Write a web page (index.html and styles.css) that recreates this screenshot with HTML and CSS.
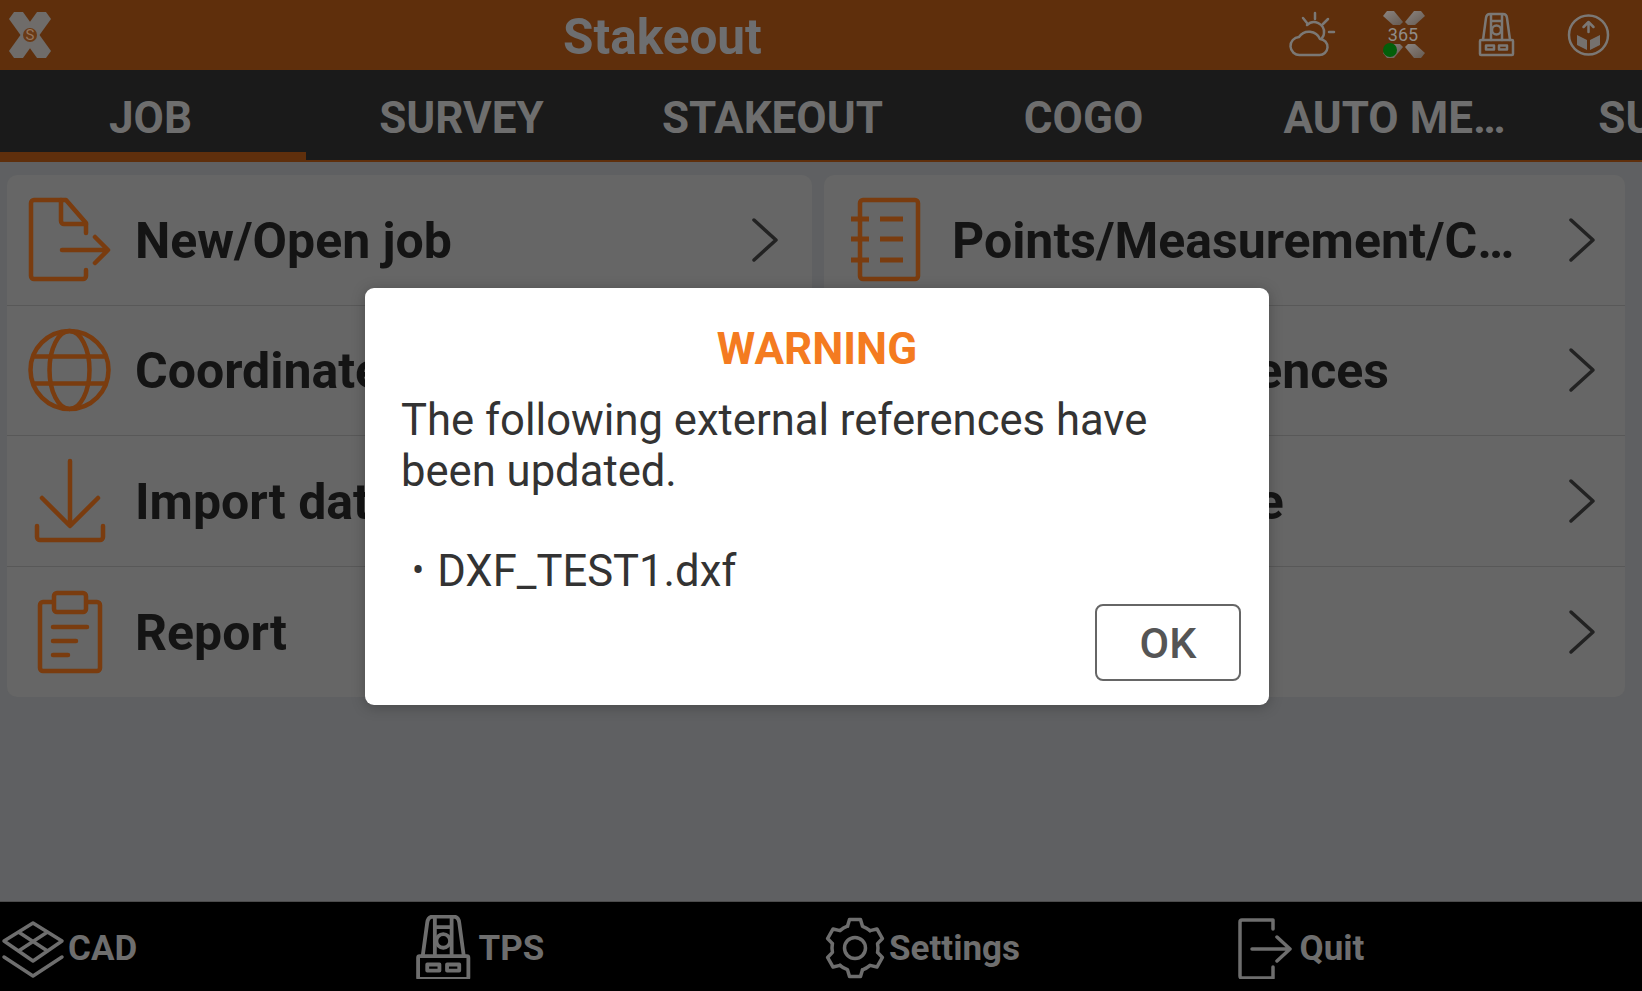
FILE: index.html
```html
<!DOCTYPE html>
<html lang="en">
<head>
    <meta charset="UTF-8">
    <title>Stakeout</title>
    <link rel="stylesheet" href="styles.css">
</head>
<body>
    <svg class="defs" width="0" height="0">
        <linearGradient id="fade" x1="0" y1="0" x2="1" y2="1">
            <stop offset="0" stop-color="#8b8582"/>
            <stop offset="1" stop-color="#665a50"/>
        </linearGradient>
        <symbol id="station" viewBox="0 0 50 50">
            <path d="M12 30 15 8Q15.500 4 19 4H32Q35.500 4 36 8L39 30M20 30V4M31 30V4M20 11H31"/>
            <rect x="9" y="30" width="33" height="15" rx="1"/>
            <circle class="solid" cx="25.500" cy="20" r="4.500"/>
            <rect class="solid" x="15" y="35.500" width="8" height="4"/>
            <rect class="solid" x="28" y="35.500" width="8" height="4"/>
        </symbol>
    </svg>

    <header class="topbar">
        <svg class="logo" width="50" height="50" viewBox="0 0 50 50">
            <polygon class="solid" points="4,9 9,2 18,2 46,41 41,48 32,48"/>
            <polygon class="solid" points="46,9 41,2 32,2 4,41 9,48 18,48"/>
            <circle class="hub" cx="25" cy="25" r="7"/>
            <text class="hub-s" x="25" y="30" text-anchor="middle">S</text>
        </svg>
        <h1 class="title">Stakeout</h1>
        <div class="status">
            <span class="slot">
                <svg width="50" height="50" viewBox="0 0 50 50">
                    <path d="M13 45a9 9 0 0 1-1-18a12 12 0 0 1 21 2a8 8 0 0 1-1 16z"/>
                    <path d="M20 15a10 10 0 0 1 17 8q0 3-2 5M28 3v6M16 8l4 5M41 9l-5 5M42 22h5"/>
                </svg>
            </span>
            <span class="slot">
                <svg width="50" height="50" viewBox="0 0 50 50">
                    <polygon class="piece" points="4,6 8,1 15,1 24,12 21,15 14,15"/>
                    <polygon class="piece" points="46,6 42,1 35,1 26,12 29,15 36,15"/>
                    <polygon class="piece" points="46,43 42,48 35,48 26,37 29,34 36,34"/>
                    <polygon class="piece" points="4,43 8,48 15,48 24,37 21,34 14,34"/>
                    <circle class="led" cx="11" cy="40" r="7"/>
                    <text class="days" x="24" y="31" text-anchor="middle">365</text>
                </svg>
            </span>
            <span class="slot">
                <svg width="50" height="50"><use href="#station" width="50" height="50"/></svg>
            </span>
            <span class="slot">
                <svg width="50" height="50" viewBox="0 0 50 50">
                    <circle cx="25.500" cy="25" r="19.500"/>
                    <path d="M25.500 22V12M20.500 17l5-5 5 5"/>
                    <polygon class="solid" points="14,25 24,30 24,40 14,35"/>
                    <polygon class="solid" points="37,25 27,30 27,40 37,35"/>
                </svg>
            </span>
        </div>
    </header>

    <nav class="tabs">
        <a class="tab active">JOB</a>
        <a class="tab">SURVEY</a>
        <a class="tab">STAKEOUT</a>
        <a class="tab">COGO</a>
        <a class="tab">AUTO ME…</a>
        <a class="tab">SURFACES</a>
    </nav>

    <main class="content">
        <section class="card">
            <div class="row">
                <svg class="ico" width="90" height="90" viewBox="0 0 90 90">
                    <path d="M61 38V28L41 5H9a3 3 0 0 0-3 3v73a3 3 0 0 0 3 3h49a3 3 0 0 0 3-3v-6"/>
                    <path d="M36 5v21a3 3 0 0 0 3 3h22M37 55H82M70 42l13 13-13 13"/>
                </svg>
                <span class="label">New/Open job</span>
                <svg class="chev" width="30" height="46" viewBox="0 0 30 46"><path d="M3 3 25 23 3 43"/></svg>
            </div>
            <div class="row">
                <svg class="ico" width="90" height="90" viewBox="0 0 90 90">
                    <circle cx="44.500" cy="45" r="39"/>
                    <ellipse cx="44.500" cy="45" rx="20" ry="39"/>
                    <path d="M10 31.500H79M10 58.500H79"/>
                </svg>
                <span class="label">Coordinate system</span>
                <svg class="chev" width="30" height="46" viewBox="0 0 30 46"><path d="M3 3 25 23 3 43"/></svg>
            </div>
            <div class="row">
                <svg class="ico" width="90" height="90" viewBox="0 0 90 90">
                    <path d="M45 5V69M17 42l28 28 28-28M12 70v11a3 3 0 0 0 3 3h60a3 3 0 0 0 3-3v-11"/>
                </svg>
                <span class="label">Import data</span>
                <svg class="chev" width="30" height="46" viewBox="0 0 30 46"><path d="M3 3 25 23 3 43"/></svg>
            </div>
            <div class="row">
                <svg class="ico" width="90" height="90" viewBox="0 0 90 90">
                    <path d="M28 15H18a3 3 0 0 0-3 3v63a3 3 0 0 0 3 3h54a3 3 0 0 0 3-3V18a3 3 0 0 0-3-3H62"/>
                    <rect x="29" y="6" width="32" height="19" rx="3"/>
                    <path d="M28 40H62M28 54H51M28 68H43"/>
                </svg>
                <span class="label">Report</span>
                <svg class="chev" width="30" height="46" viewBox="0 0 30 46"><path d="M3 3 25 23 3 43"/></svg>
            </div>
        </section>
        <section class="card">
            <div class="row">
                <svg class="ico" width="90" height="90" viewBox="0 0 90 90">
                    <rect x="18" y="5" width="58" height="79" rx="3"/>
                    <path class="thick" d="M9 24H27M9 44H27M9 65H27M38 24H61M38 44H61M38 65H61"/>
                </svg>
                <span class="label">Points/Measurement/C…</span>
                <svg class="chev" width="30" height="46" viewBox="0 0 30 46"><path d="M3 3 25 23 3 43"/></svg>
            </div>
            <div class="row">
                <span class="ico-gap"></span>
                <span class="label">External references</span>
                <svg class="chev" width="30" height="46" viewBox="0 0 30 46"><path d="M3 3 25 23 3 43"/></svg>
            </div>
            <div class="row">
                <span class="ico-gap"></span>
                <span class="label">Data exchange</span>
                <svg class="chev" width="30" height="46" viewBox="0 0 30 46"><path d="M3 3 25 23 3 43"/></svg>
            </div>
            <div class="row">
                <span class="ico-gap"></span>
                <svg class="chev" width="30" height="46" viewBox="0 0 30 46"><path d="M3 3 25 23 3 43"/></svg>
            </div>
        </section>
    </main>

    <footer class="bottombar">
        <a class="tool">
            <svg width="64" height="64" viewBox="0 0 64 64">
                <path d="M32 8 61 26 32 46 3 26ZM17.500 17 46.500 36M46.500 17 17.500 36M3 42 32 61 61 42"/>
            </svg>
            <span>CAD</span>
        </a>
        <a class="tool">
            <svg class="tps" width="64" height="64" viewBox="5 3 42 42"><use href="#station" width="50" height="50"/></svg>
            <span>TPS</span>
        </a>
        <a class="tool">
            <svg width="64" height="64" viewBox="0 0 64 64">
                <g transform="translate(33 33)">
                    <path id="tooth" d="M-7.500-21.700-5.500-28.500H5.500L7.500-21.700A23 23 0 0 1 15.100-17.400"/>
                    <use href="#tooth" transform="rotate(60)"/>
                    <use href="#tooth" transform="rotate(120)"/>
                    <use href="#tooth" transform="rotate(180)"/>
                    <use href="#tooth" transform="rotate(240)"/>
                    <use href="#tooth" transform="rotate(300)"/>
                    <circle r="10.500"/>
                </g>
            </svg>
            <span>Settings</span>
        </a>
        <a class="tool">
            <svg width="64" height="64" viewBox="0 0 64 64">
                <path d="M40 14V5H9a2 2 0 0 0-2 2v54a2 2 0 0 0 2 2h31V52M19 34H57M44 22l13 12-13 12"/>
            </svg>
            <span>Quit</span>
        </a>
    </footer>

    <div class="dialog">
        <h2 class="dialog-title">WARNING</h2>
        <p class="dialog-text">The following external references have been updated.</p>
        <ul class="dialog-list">
            <li>DXF_TEST1.dxf</li>
        </ul>
        <div class="dialog-actions">
            <button class="ok" type="button">OK</button>
        </div>
    </div>
</body>
</html>
```

FILE: styles.css
```css
*{box-sizing: border-box;}
html,body{height: 100%;}
body{
    margin: 0;
    display: flex;
    flex-direction: column;
    height: 991px;
    overflow: hidden;
    position: relative;
    background-color: #5f6062;
    font-family: Roboto, "Liberation Sans", sans-serif;
}
.defs{position: absolute;}
svg{display: block;flex: none;fill: none;stroke-linecap: round;stroke-linejoin: round;}

/* top bar */
.topbar{
    height: 70px;
    flex: none;
    display: flex;
    align-items: center;
    padding: 0 8px 0 5px;
    background-color: #5f2f0c;
}
.topbar svg{stroke: #7b7875;stroke-width: 2.5;}
.topbar .solid,.tool .solid{fill: #75716e;stroke: none;}
.topbar .piece{fill: url(#fade);stroke: none;}
.topbar .logo .solid{fill: #6f6c6a;}
.logo .hub{fill: #6a3a16;stroke: none;}
.logo .hub-s{font-size: 15px;fill: #94745c;stroke: none;}
.title{
    margin: 3px 0 0 508px;
    font-size: 49.500px;
    font-weight: 700;
    color: #6d6e70;
}
.status{display: flex;margin-left: auto;}
.slot{width: 92px;display: flex;justify-content: center;}
.led{fill: #035f0a;stroke: none !important;}
.days{font-size: 18px;fill: #908c88;stroke: none !important;}

/* tabs */
.tabs{
    height: 92px;
    flex: none;
    display: flex;
    overflow: hidden;
    background-color: #1a1a1a;
    border-bottom: 2px solid #5f2f0c;
}
.tab{
    position: relative;
    flex: none;
    width: 311px;
    padding-right: 10px;
    text-align: center;
    line-height: 97px;
    font-size: 44px;
    font-weight: 700;
    color: #6e6e6e;
}
.tab.active::after{
    content: "";
    position: absolute;
    left: 0;
    bottom: -2px;
    width: 306px;
    height: 10px;
    background-color: #5f2f0c;
}

/* menu cards */
.content{
    flex: 1;
    display: grid;
    grid-template-columns: 805px 801px;
    column-gap: 12px;
    align-items: start;
    padding: 13px 17px 0 7px;
}
.card{border-radius: 10px;background-color: #666;}
.row{
    height: 130.500px;
    display: flex;
    align-items: center;
    padding: 0 31px 0 18px;
    border-bottom: 1px solid #585858;
}
.row:last-child{border-bottom: 0;}
.card + .card .row{padding-right: 27px;}
.ico{margin-right: 20px;stroke: #7a3c0f;stroke-width: 4.5;}
.ico .thick{stroke-width: 5;stroke-linecap: butt;}
.ico-gap{width: 110px;flex: none;}
.label{
    margin-top: 2px;
    font-size: 50px;
    font-weight: 700;
    color: #141414;
    white-space: nowrap;
}
.chev{margin-left: auto;stroke: #222;stroke-width: 3.500;}

/* bottom toolbar */
.bottombar{
    height: 90px;
    flex: none;
    display: grid;
    grid-template-columns: repeat(4, 410.500px);
    background-color: #000;
    border-top: 1px solid #4c4c4c;
}
.tool{
    display: flex;
    align-items: center;
    gap: 3px;
    padding-left: 1px;
    font-size: 35px;
    font-weight: 700;
    color: #6e6e6e;
}
.tool span{margin-top: 3px;}
.tool svg{stroke: #6e6e6e;stroke-width: 3.500;}
.tool svg.tps{stroke-width: 2.500;}
.tool .solid{fill: #6e6e6e;}

/* warning dialog */
.dialog{
    position: absolute;
    left: 365px;
    top: 288px;
    width: 904px;
    height: 417px;
    padding: 31px 28px 0 36px;
    border-radius: 9px;
    background-color: #fff;
    color: #333;
    box-shadow: 0 2px 14px rgba(0,0,0,.25);
}
.dialog-title{
    margin: 0 0 16px;
    padding-right: 8px;
    text-align: center;
    font-size: 44px;
    font-weight: 700;
    line-height: 60px;
    color: #f47b20;
}
.dialog-text{
    max-width: 790px;
    margin: 0;
    font-size: 43.600px;
    line-height: 51px;
}
.dialog-list{
    margin: 49px 0 0;
    padding: 0 0 0 11px;
    list-style: none;
    font-size: 43.600px;
    line-height: 51px;
}
.dialog-list li::before{content: "•";margin-right: 13px;font-size: 36px;vertical-align: 3px;}
.dialog-actions{display: flex;justify-content: flex-end;margin-top: 7px;}
.ok{
    width: 146px;
    height: 77px;
    padding: 0;
    border: 2px solid #666;
    border-radius: 8px;
    background-color: #fff;
    font-family: inherit;
    font-size: 43px;
    font-weight: 500;
    color: #555;
}
```
